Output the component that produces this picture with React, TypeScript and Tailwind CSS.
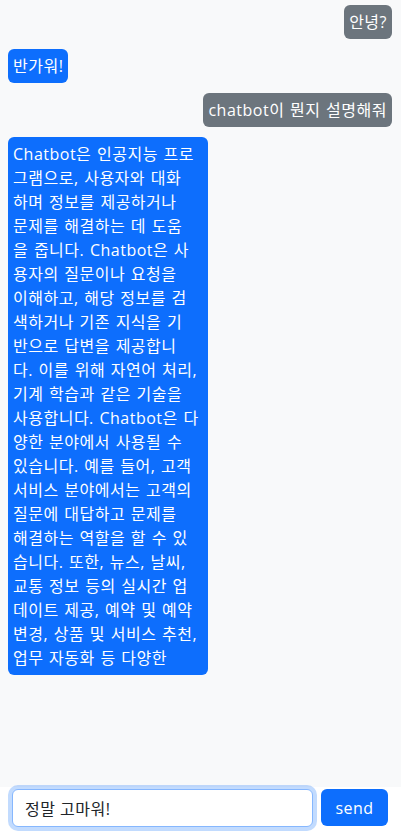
import { useState } from 'react';

interface Message {
  id: number;
  from: 'user' | 'bot';
  lines: string[];
}

const messages: Message[] = [
  { id: 1, from: 'user', lines: ['안녕?'] },
  { id: 2, from: 'bot', lines: ['반가워!'] },
  { id: 3, from: 'user', lines: ['chatbot이 뭔지 설명해줘'] },
  {
    id: 4,
    from: 'bot',
    lines: [
      'Chatbot은 인공지능 프로',
      '그램으로, 사용자와 대화',
      '하며 정보를 제공하거나',
      '문제를 해결하는 데 도움',
      '을 줍니다. Chatbot은 사',
      '용자의 질문이나 요청을',
      '이해하고, 해당 정보를 검',
      '색하거나 기존 지식을 기',
      '반으로 답변을 제공합니',
      '다. 이를 위해 자연어 처리,',
      '기계 학습과 같은 기술을',
      '사용합니다. Chatbot은 다',
      '양한 분야에서 사용될 수',
      '있습니다. 예를 들어, 고객',
      '서비스 분야에서는 고객의',
      '질문에 대답하고 문제를',
      '해결하는 역할을 할 수 있',
      '습니다. 또한, 뉴스, 날씨,',
      '교통 정보 등의 실시간 업',
      '데이트 제공, 예약 및 예약',
      '변경, 상품 및 서비스 추천,',
      '업무 자동화 등 다양한',
    ],
  },
];

export default function App() {
  const [input, setInput] = useState('정말 고마워!');

  return (
    <div className="flex flex-col h-screen font-['Open_Sans','Noto_Sans_CJK_KR',sans-serif] text-base leading-6 tracking-[0.5px] [word-spacing:1px]">
      <div className="flex-1 bg-[#f8f9fa] pt-[5px] pl-2 pr-[9px] flex flex-col gap-[10px] overflow-y-auto">
        {messages.map((msg) => {
          const long = msg.lines.length > 1;
          return (
            <div key={msg.id} className={msg.from === 'user' ? 'flex justify-end' : 'flex justify-start'}>
              <div
                className={
                  (msg.from === 'user' ? 'bg-[#6c757d] ' : 'bg-[#0d6efd] ') +
                  (long ? 'w-[200px] ' : 'max-w-[200px] ') +
                  'rounded-md text-white p-[5px] whitespace-nowrap'
                }
              >
                {msg.lines.map((line, i) => (
                  <div key={i}>{line}</div>
                ))}
              </div>
            </div>
          );
        })}
      </div>
      <div className="h-[49px] bg-white flex items-start gap-2 pt-[2px] pl-3 pr-[13px]">
        <input
          value={input}
          onChange={(e) => setInput(e.target.value)}
          autoFocus
          className="flex-1 h-[38px] rounded-md border border-[#86b7fe] ring-4 ring-[#0d6efd]/25 px-3 text-[#212529] outline-none bg-white"
        />
        <button className="w-[67px] h-[37px] rounded-md bg-[#0d6efd] text-white">send</button>
      </div>
    </div>
  );
}
